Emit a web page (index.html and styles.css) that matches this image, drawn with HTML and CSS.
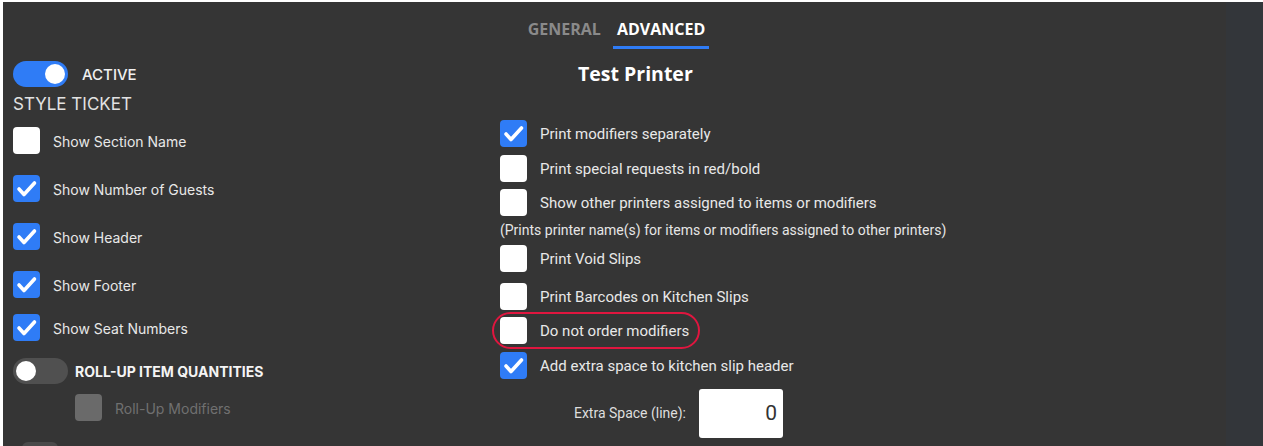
FILE: index.html
```html
<!DOCTYPE html>
<html>
<head>
<meta charset="utf-8">
<link rel="stylesheet" href="styles.css">
</head>
<body>
<div class="app">
  <div class="main">
    <div class="tabs">
      <div class="tab">GENERAL</div>
      <div class="tab active">ADVANCED</div>
    </div>
    <div class="content">
      <div class="left">
        <div class="toggle-row">
          <div class="toggle on"><span class="knob"></span></div>
          <span class="toggle-label">ACTIVE</span>
        </div>
        <div class="section-title">STYLE TICKET</div>
        <div class="checks">
          <div class="check-row"><span class="box"></span><span class="lbl">Show Section Name</span></div>
          <div class="check-row"><span class="box checked"><svg viewBox="0 0 27 27"><polyline points="6,14 11,19.5 21.5,8"/></svg></span><span class="lbl">Show Number of Guests</span></div>
          <div class="check-row"><span class="box checked"><svg viewBox="0 0 27 27"><polyline points="6,14 11,19.5 21.5,8"/></svg></span><span class="lbl">Show Header</span></div>
          <div class="check-row"><span class="box checked"><svg viewBox="0 0 27 27"><polyline points="6,14 11,19.5 21.5,8"/></svg></span><span class="lbl">Show Footer</span></div>
          <div class="check-row tight"><span class="box checked"><svg viewBox="0 0 27 27"><polyline points="6,14 11,19.5 21.5,8"/></svg></span><span class="lbl">Show Seat Numbers</span></div>
        </div>
        <div class="toggle-row rollup">
          <div class="toggle off"><span class="knob"></span></div>
          <span class="toggle-label bold">ROLL-UP ITEM QUANTITIES</span>
        </div>
        <div class="check-row disabled sub"><span class="box"></span><span class="lbl">Roll-Up Modifiers</span></div>
        <div class="peek"></div>
      </div>
      <div class="right">
        <div class="printer-title">Test Printer</div>
        <div class="opts">
          <div class="check-row r"><span class="box checked"><svg viewBox="0 0 27 27"><polyline points="6,14 11,19.5 21.5,8"/></svg></span><span class="lbl">Print modifiers separately</span></div>
          <div class="check-row r"><span class="box"></span><span class="lbl">Print special requests in red/bold</span></div>
          <div class="check-row r"><span class="box"></span><span class="lbl">Show other printers assigned to items or modifiers</span></div>
          <div class="note">(Prints printer name(s) for items or modifiers assigned to other printers)</div>
          <div class="check-row r"><span class="box"></span><span class="lbl">Print Void Slips</span></div>
          <div class="check-row r barcodes"><span class="box"></span><span class="lbl">Print Barcodes on Kitchen Slips</span></div>
          <div class="check-row r highlight"><span class="box"></span><span class="lbl">Do not order modifiers</span><span class="ring"></span></div>
          <div class="check-row r"><span class="box checked"><svg viewBox="0 0 27 27"><polyline points="6,14 11,19.5 21.5,8"/></svg></span><span class="lbl">Add extra space to kitchen slip header</span></div>
        </div>
        <div class="extra-row">
          <span class="extra-lbl">Extra Space (line):</span>
          <div class="extra-input">0</div>
        </div>
      </div>
    </div>
  </div>
  <div class="strip"></div>
</div>
</body>
</html>
```

FILE: styles.css
```css
html, body {
  margin: 0;
  padding: 0;
  background: #ffffff;
  overflow: hidden;
}
.app {
  display: flex;
  margin: 2px 0 0 3px;
  height: 444px;
  width: 1260px;
  background: #353535;
  overflow: hidden;
}
.main {
  width: 1223px;
  display: flex;
  flex-direction: column;
}
.strip {
  width: 37px;
  background: #33363a;
}
.tabs {
  display: flex;
  justify-content: center;
  gap: 8px;
  padding-left: 4px;
}
.tab {
  font-family: "Open Sans", "Inter", sans-serif;
  font-weight: 700;
  font-size: 16px;
  line-height: 20px;
  padding: 17px 4px 7px;
  color: #8a8a8a;
  border-bottom: 3px solid transparent;
}
.tab.active {
  color: #ffffff;
  border-bottom-color: #2f7cf6;
}
.content {
  display: flex;
  margin-top: 12px;
}
.left {
  width: 487px;
  padding-left: 10px;
  display: flex;
  flex-direction: column;
  font-family: "Inter", "Roboto", sans-serif;
}
.right {
  flex: 1;
  display: flex;
  flex-direction: column;
  font-family: "Roboto", sans-serif;
}
.toggle-row {
  display: flex;
  align-items: center;
  gap: 14px;
  height: 26px;
}
.toggle {
  width: 55px;
  height: 26px;
  border-radius: 13px;
  position: relative;
  flex: none;
}
.toggle.on { background: #2f7cf6; }
.toggle.off { background: #505050; }
.knob {
  position: absolute;
  top: 3px;
  width: 20px;
  height: 20px;
  border-radius: 50%;
  background: #ffffff;
}
.toggle.on .knob { right: 3px; }
.toggle.off .knob { left: 3px; }
.toggle-label {
  color: #f0f0f0;
  font-size: 15px;
  font-weight: 500;
}
.toggle-label.bold {
  font-weight: 700;
  font-size: 14px;
  color: #f4f4f4;
}
.section-title {
  margin-top: 7px;
  font-size: 17px;
  line-height: 20px;
  color: #e2e2e2;
}
.checks {
  margin-top: 13px;
  display: flex;
  flex-direction: column;
  gap: 21px;
}
.check-row {
  display: flex;
  align-items: center;
  gap: 13px;
  height: 27px;
  position: relative;
}
.check-row .lbl { padding-top: 2px; }
.check-row.tight { margin-top: -5px; }
.box {
  width: 27px;
  height: 27px;
  border-radius: 4px;
  background: #ffffff;
  flex: none;
  display: block;
}
.box.checked { background: #2f7cf6; }
.box svg {
  width: 27px;
  height: 27px;
  display: block;
}
.box svg polyline {
  fill: none;
  stroke: #ffffff;
  stroke-width: 3.6;
  stroke-linecap: round;
  stroke-linejoin: round;
}
.lbl {
  font-size: 14px;
  color: #e8e8e8;
  white-space: nowrap;
}
.right .lbl { font-size: 15px; padding-top: 1px; }
.rollup {
  margin-top: 17px;
  gap: 7px;
}
.check-row.sub {
  margin-top: 10px;
  margin-left: 62px;
}
.disabled .box { background: #6a6a6a; }
.disabled .lbl { color: #707070; }
.peek {
  margin-top: 21px;
  margin-left: 9px;
  width: 36px;
  height: 12px;
  border-radius: 6px;
  background: #4a4a4a;
}
.printer-title {
  font-family: "Open Sans", "Inter", sans-serif;
  font-weight: 700;
  font-size: 19.5px;
  line-height: 26px;
  color: #ffffff;
  margin-left: 78px;
}
.opts {
  margin-top: 33px;
  display: flex;
  flex-direction: column;
  gap: 7.5px;
}
.note {
  font-size: 14px;
  line-height: 16px;
  color: #e6e6e6;
  margin-top: -2px;
  white-space: nowrap;
}
.barcodes { margin-top: 3px; }
.ring {
  position: absolute;
  left: -8px;
  top: -5.5px;
  width: 204px;
  height: 33px;
  border: 2.5px solid #e0163f;
  border-radius: 19px;
}
.extra-row {
  display: flex;
  align-items: center;
  gap: 13px;
  margin-top: 10px;
}
.extra-lbl {
  width: 186px;
  text-align: right;
  font-size: 14px;
  color: #dedede;
}
.extra-input {
  width: 84px;
  height: 49px;
  box-sizing: border-box;
  background: #ffffff;
  border-radius: 3px;
  padding-right: 6px;
  text-align: right;
  font-size: 21px;
  line-height: 49px;
  color: #333333;
}
```
